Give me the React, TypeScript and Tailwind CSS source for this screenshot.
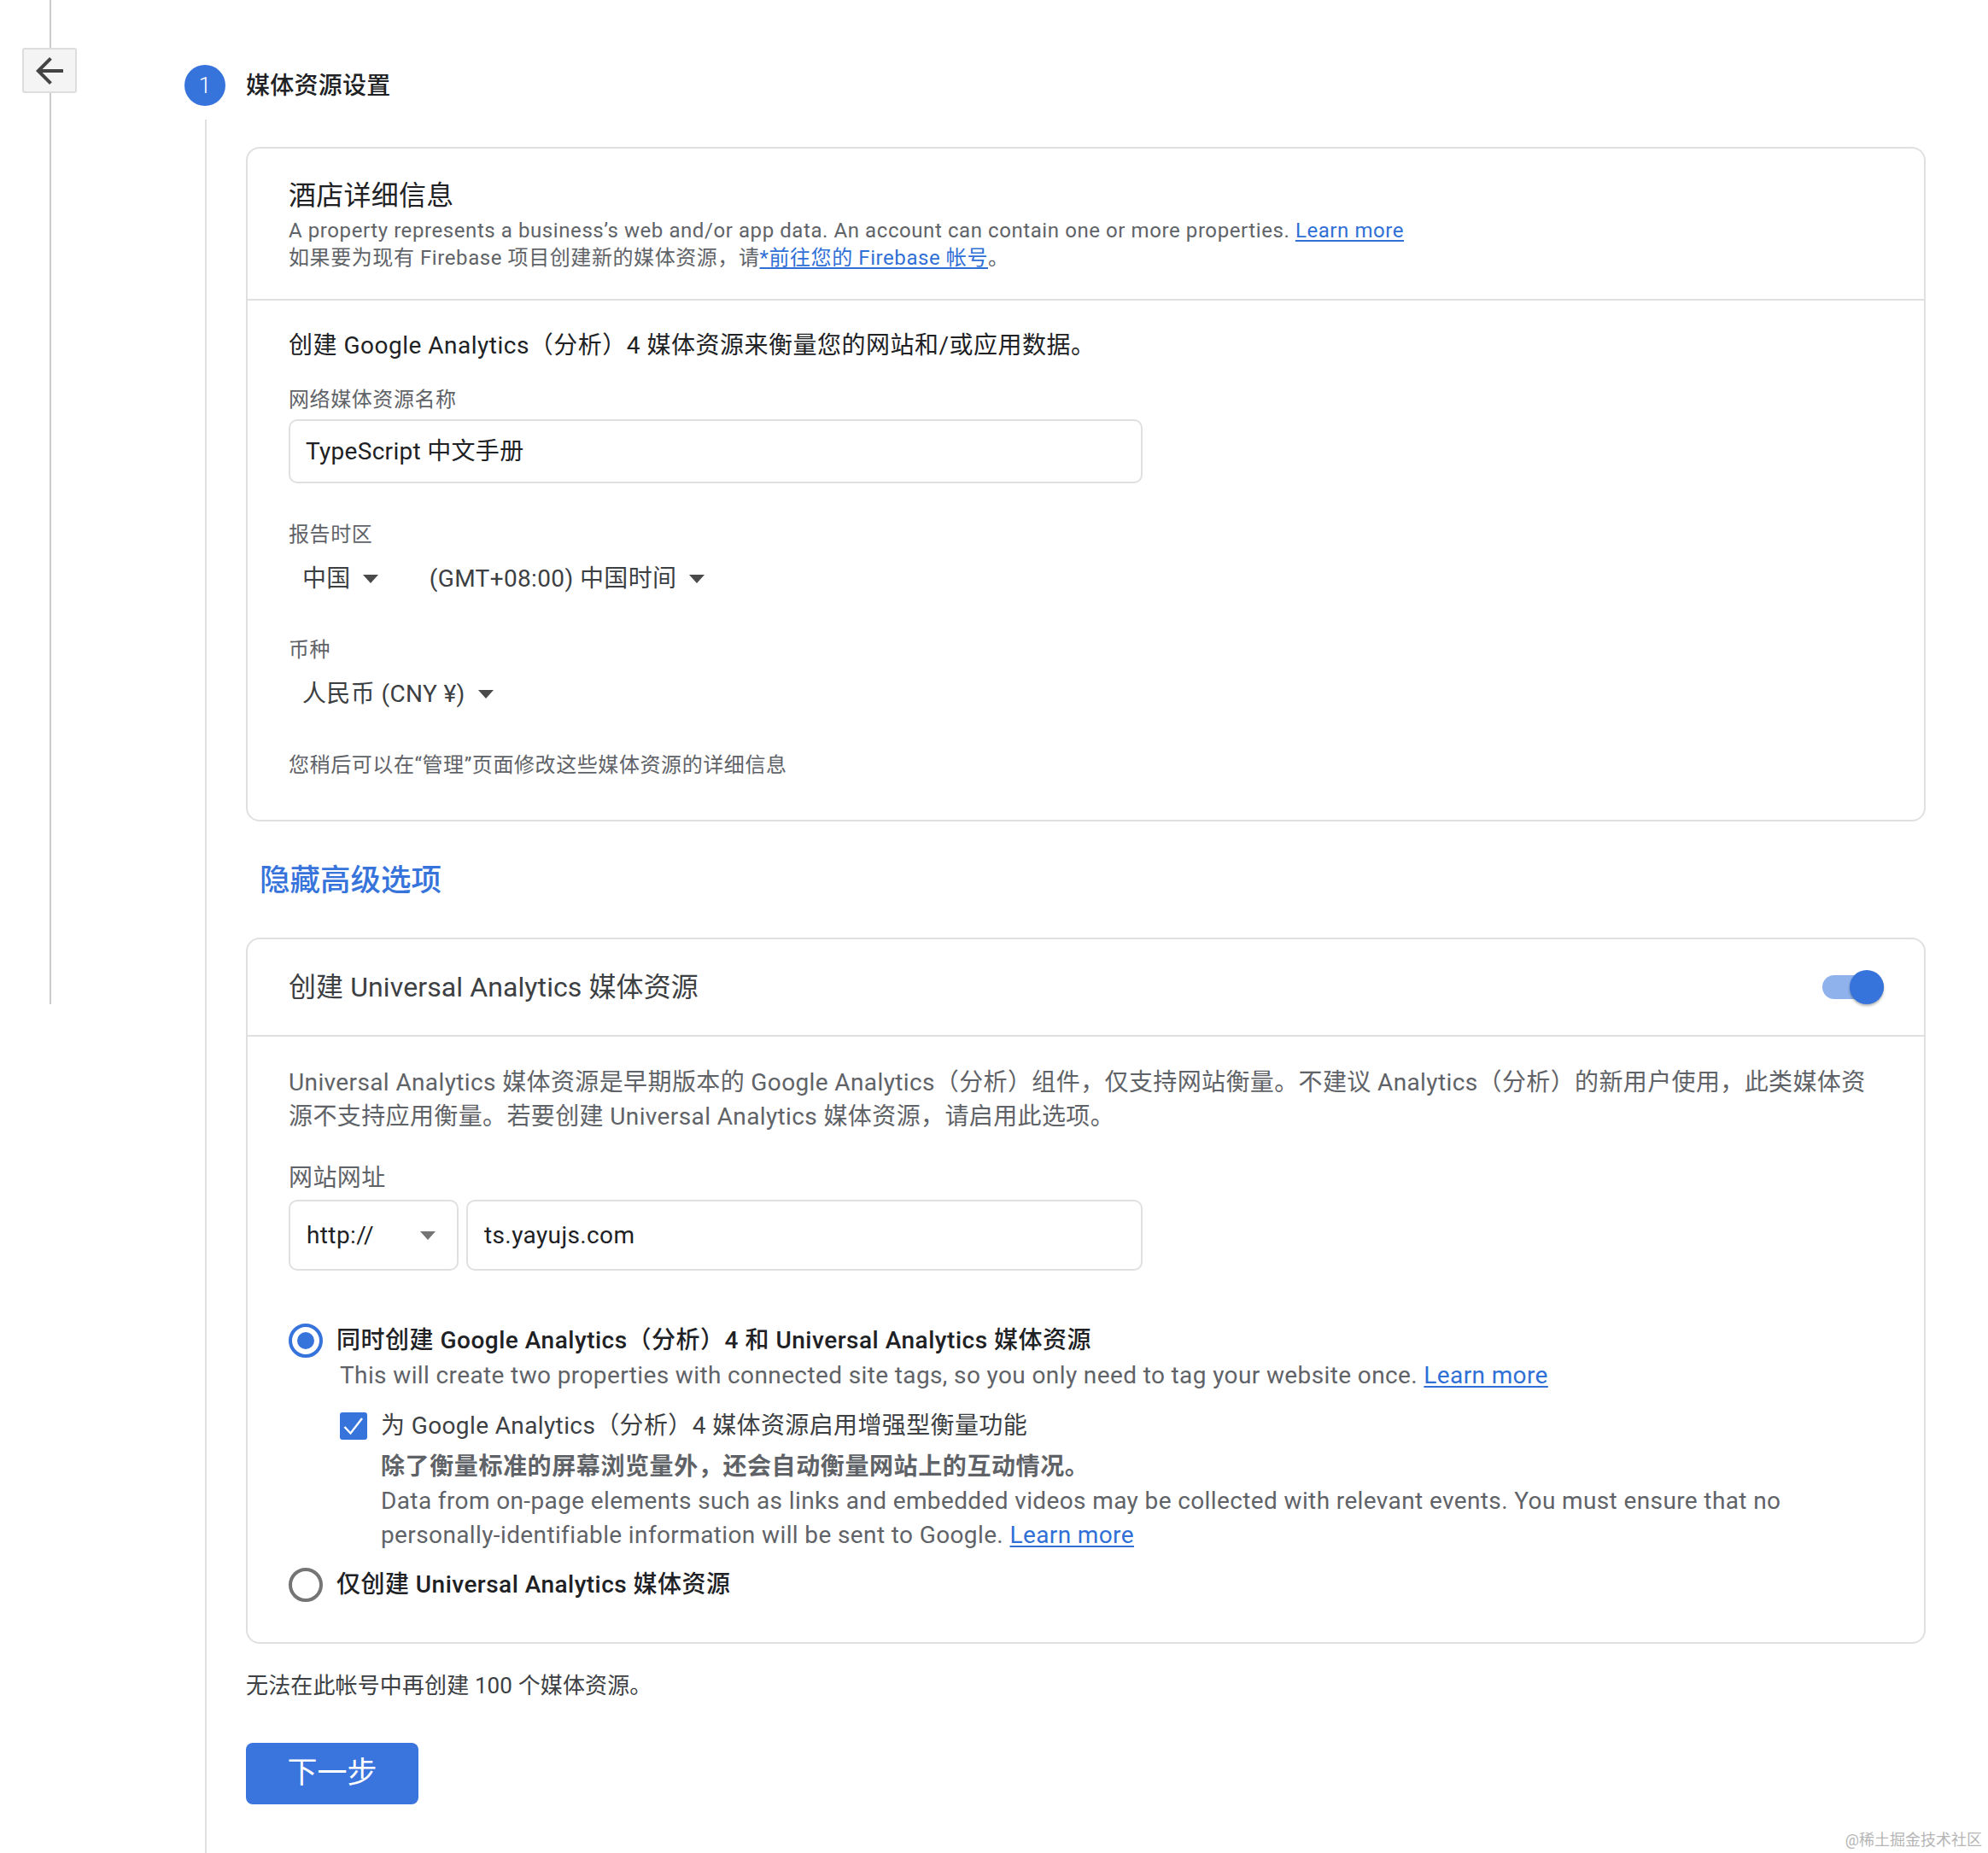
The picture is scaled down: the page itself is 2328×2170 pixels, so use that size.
const Caret = ({ className = "" }: { className?: string }) => (
  <span
    className={`inline-block w-0 h-0 border-x-[9px] border-x-transparent border-t-[10px] border-t-[#4a4a4a] ${className}`}
  />
);

const Link = ({ children }: { children: React.ReactNode }) => (
  <a className="text-[#2f6fd6] underline underline-offset-[3px]">{children}</a>
);

const Label = ({ children }: { children: React.ReactNode }) => (
  <div className="text-[24px] leading-[32px] tracking-[0.58px] text-[#5f6368]">{children}</div>
);

const Radio = ({ checked }: { checked?: boolean }) => (
  <span
    className={`w-[40px] h-[40px] rounded-full border-[4px] flex items-center justify-center shrink-0 ${
      checked ? "border-[#3674dc]" : "border-[#757575]"
    }`}
  >
    {checked && <span className="w-[20px] h-[20px] rounded-full bg-[#3674dc]" />}
  </span>
);

const App = () => {
  return (
    <div className="relative w-[2328px] h-[2170px] overflow-hidden bg-white flex font-[Roboto,'Noto_Sans_CJK_SC',sans-serif] text-[#202124]">
      {/* left rail with the back button */}
      <div className="relative w-[216px] shrink-0 pl-[58px]">
        <div className="w-[2px] h-[1176px] bg-[#cccccc]" />
        <button className="absolute left-[26px] top-[56px] w-[64px] h-[53px] flex items-center justify-center bg-[#f4f4f4] border-2 border-[#dddddd] rounded-[3px]">
          <svg width="48" height="48" viewBox="0 0 24 24" fill="#444444">
            <path d="M20 11H7.83l5.59-5.59L12 4l-8 8 8 8 1.41-1.41L7.83 13H20v-2z" />
          </svg>
        </button>
      </div>

      <div className="flex-1 flex flex-col pt-[76px] min-w-0">
        <div className="flex items-center gap-[24px] h-[48px]">
          <span className="w-[48px] h-[48px] rounded-full bg-[#3674dc] text-white text-[26px] font-light flex items-center justify-center">
            1
          </span>
          <span className="text-[28px] font-medium leading-[40px] tracking-[0.25px] pt-[2px]">媒体资源设置</span>
        </div>

        <div className="flex-1 ml-[24px] mt-[16px] border-l-2 border-[#e0e0e0] pl-[46px] pr-[73px] pt-[32px]">
          {/* property details card */}
          <section className="border-2 border-[#e0e0e0] rounded-[16px]">
            <div className="px-[48px] pt-[35px] pb-[32px] border-b-2 border-[#e0e0e0]">
              <h2 className="text-[32px] leading-[40px] tracking-[0.25px]">酒店详细信息</h2>
              <p className="mt-[5px] text-[24px] leading-[32px] tracking-[0.58px] text-[#5f6368]">
                A property represents a business’s web and/or app data. An account can contain one or more properties.{" "}
                <Link>Learn more</Link>
                <br />
                如果要为现有 Firebase 项目创建新的媒体资源，请<Link>*前往您的 Firebase 帐号</Link>。
              </p>
            </div>
            <div className="px-[48px] pt-[33px] pb-[48px]">
              <p className="text-[28px] leading-[40px] tracking-[0.5px]">创建 Google Analytics（分析）4 媒体资源来衡量您的网站和/或应用数据。</p>
              <div className="mt-[27px]">
                <Label>网络媒体资源名称</Label>
              </div>
              <div className="mt-[7px] w-[1000px] h-[75px] border-2 border-[#e0e0e0] rounded-[10px] px-[18px] flex items-center text-[28px] tracking-[0.3px]">
                TypeScript 中文手册
              </div>
              <div className="mt-[44px]">
                <Label>报告时区</Label>
              </div>
              <div className="mt-[16px] pl-[16px] flex items-center h-[40px] text-[28px] tracking-[0.37px] text-[#3c4043]">
                <span>中国</span>
                <Caret className="ml-[14px]" />
                <span className="ml-[60px]">(GMT+08:00) 中国时间</span>
                <Caret className="ml-[15px]" />
              </div>
              <div className="mt-[47px]">
                <Label>币种</Label>
              </div>
              <div className="mt-[16px] pl-[16px] flex items-center h-[40px] text-[28px] tracking-[0.37px] text-[#3c4043]">
                <span>人民币 (CNY ¥)</span>
                <Caret className="ml-[15px]" />
              </div>
              <div className="mt-[47px]">
                <Label>您稍后可以在“管理”页面修改这些媒体资源的详细信息</Label>
              </div>
            </div>
          </section>

          <div className="mt-[45px] ml-[16px] text-[35.5px] leading-[48px] font-medium text-[#3674dc]">隐藏高级选项</div>

          {/* universal analytics card */}
          <section className="mt-[43px] border-2 border-[#e0e0e0] rounded-[16px]">
            <div className="h-[114px] pl-[48px] pr-[47px] border-b-2 border-[#e0e0e0] flex items-center justify-between">
              <h2 className="text-[32px] leading-[40px] tracking-[0.1px] text-[#3c4043] mb-[1px]">创建 Universal Analytics 媒体资源</h2>
              <div className="relative w-[72px] h-[28px] rounded-full bg-[#8fb2ec]">
                <span className="absolute right-0 top-[-6px] w-[40px] h-[40px] rounded-full bg-[#3674dc] shadow-[0_2px_3px_rgba(0,0,0,0.3)]" />
              </div>
            </div>
            <div className="px-[48px] pt-[34px] pb-[47px] text-[28px] leading-[40px] tracking-[0.38px]">
              <p className="text-[#5f6368]">
                Universal Analytics 媒体资源是早期版本的 Google Analytics（分析）组件，仅支持网站衡量。不建议 Analytics（分析）的新用户使用，此类媒体资
                <br />
                源不支持应用衡量。若要创建 Universal Analytics 媒体资源，请启用此选项。
              </p>
              <div className="mt-[32px] text-[#5f6368]">网站网址</div>
              <div className="mt-[5px] w-[1000px] flex gap-[9px]">
                <div className="w-[199px] h-[83px] border-2 border-[#e0e0e0] rounded-[10px] pl-[19px] pr-[25px] flex items-center justify-between shrink-0">
                  <span>http://</span>
                  <Caret className="!border-t-[#757575]" />
                </div>
                <div className="flex-1 h-[83px] border-2 border-[#e0e0e0] rounded-[10px] pl-[19px] flex items-center">
                  ts.yayujs.com
                </div>
              </div>
              <div className="mt-[62px] flex items-center gap-[16px]">
                <Radio checked />
                <span className="font-medium tracking-[0.5px]">同时创建 Google Analytics（分析）4 和 Universal Analytics 媒体资源</span>
              </div>
              <p className="mt-[1px] ml-[60px] text-[#5f6368]">
                This will create two properties with connected site tags, so you only need to tag your website once.{" "}
                <Link>Learn more</Link>
              </p>
              <div className="mt-[19px] ml-[60px] flex items-center gap-[16px]">
                <span className="w-[32px] h-[32px] rounded-[3px] bg-[#3674dc] flex items-center justify-center shrink-0">
                  <svg width="24" height="22" viewBox="0 0 24 22" fill="none" stroke="white" strokeWidth="2.4">
                    <path d="M1.5 12l7 7.5L22 2" />
                  </svg>
                </span>
                <span className="text-[#3c4043]">为 Google Analytics（分析）4 媒体资源启用增强型衡量功能</span>
              </div>
              <div className="mt-[8px] ml-[108px] text-[#5f6368]">
                <div className="font-bold tracking-[0.6px]">除了衡量标准的屏幕浏览量外，还会自动衡量网站上的互动情况。</div>
                <p>
                  Data from on-page elements such as links and embedded videos may be collected with relevant events. You must ensure that no
                  <br />
                  personally-identifiable information will be sent to Google. <Link>Learn more</Link>
                </p>
              </div>
              <div className="mt-[18px] flex items-center gap-[16px]">
                <Radio />
                <span className="font-medium tracking-[0.46px]">仅创建 Universal Analytics 媒体资源</span>
              </div>
            </div>
          </section>

          <p className="mt-[31px] text-[26px] leading-[36px] tracking-[0.13px] text-[#3c4043]">无法在此帐号中再创建 100 个媒体资源。</p>
          <button className="mt-[49px] w-[202px] h-[72px] rounded-[8px] bg-[#3a74dd] text-white text-[35px] flex items-center justify-center">
            下一步
          </button>
        </div>
      </div>

      <div className="absolute right-[7px] bottom-[4px] text-[18px] leading-[22px] text-[#b5b5b5]">@稀土掘金技术社区</div>
    </div>
  );
};

export default App;
